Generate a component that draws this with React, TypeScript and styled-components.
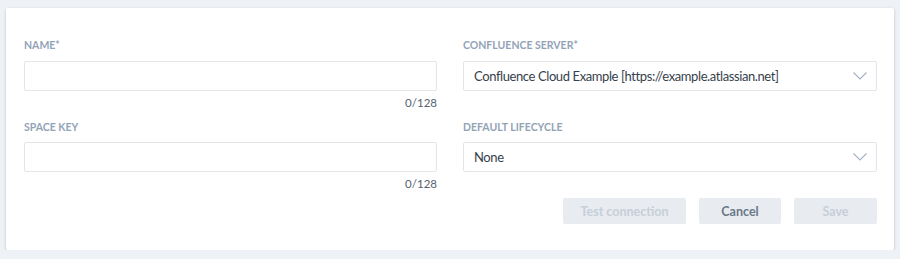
import React from "react";
import styled, { createGlobalStyle } from "styled-components";

const GlobalStyle = createGlobalStyle`
  html, body {
    margin: 0;
    padding: 0;
    background: #eef1f5;
    font-family: Lato, "Noto Sans", "Liberation Sans", sans-serif;
  }
`;

const Card = styled.div`
  margin: 8px 6px 0 6px;
  width: 888px;
  box-sizing: border-box;
  background: #ffffff;
  border-radius: 2px;
  box-shadow: 0 1px 3px rgba(0, 0, 0, 0.22);
  padding: 30px 17px 26px 18px;
`;

const Form = styled.div`
  display: grid;
  grid-template-columns: 413px 414px;
  column-gap: 26px;
`;

const Label = styled.label<{ $spaced?: boolean }>`
  display: block;
  height: 14px;
  line-height: 14px;
  margin: ${(p) => (p.$spaced ? "10px" : "0")} 0 ${(p) => (p.$spaced ? "8px" : "9px")} 0;
  font-size: 10.5px;
  font-weight: 700;
  color: #93a3b6;
  text-transform: uppercase;
`;

const Input = styled.input`
  display: block;
  width: 100%;
  height: 30px;
  box-sizing: border-box;
  border: 1px solid #e2e6eb;
  border-radius: 2px;
  padding: 0 10px;
  font: inherit;
  font-size: 13px;
  outline: none;
`;

const Select = styled.div`
  display: flex;
  align-items: center;
  justify-content: space-between;
  height: 30px;
  box-sizing: border-box;
  border: 1px solid #e2e6eb;
  border-radius: 2px;
  padding: 0 9px 0 10px;
  font-size: 13px;
  letter-spacing: -0.4px;
  color: #363f4b;
`;

const Counter = styled.div`
  height: 14px;
  line-height: 14px;
  margin-top: 5px;
  text-align: right;
  font-size: 11.5px;
  color: #56616f;
`;

const Spacer = styled.div`
  height: 14px;
  margin-top: 5px;
`;

const Actions = styled.div`
  grid-column: 2;
  display: flex;
  justify-content: flex-end;
  gap: 13px;
  margin-top: 7px;
`;

const Button = styled.button<{ $w: number; $disabled?: boolean }>`
  width: ${(p) => p.$w}px;
  height: 26px;
  border: none;
  border-radius: 2px;
  background: #e8ebef;
  font: inherit;
  font-size: 12.5px;
  font-weight: 700;
  color: ${(p) => (p.$disabled ? "#c6cfda" : "#6a7889")};
  padding: 0;
  cursor: ${(p) => (p.$disabled ? "default" : "pointer")};
`;

const Chevron = () => (
  <svg width="14" height="8" viewBox="0 0 14 8" fill="none">
    <path d="M0.5 0.5 L7 7 L13.5 0.5" stroke="#a3b1c2" strokeWidth="1.1" />
  </svg>
);

export default function App() {
  return (
    <>
      <GlobalStyle />
      <Card>
        <Form>
          <Label>Name*</Label>
          <Label>Confluence Server*</Label>
          <Input />
          <Select>
            <span>Confluence Cloud Example [https://example.atlassian.net]</span>
            <Chevron />
          </Select>
          <Counter>0/128</Counter>
          <Spacer />
          <Label $spaced>Space Key</Label>
          <Label $spaced>Default Lifecycle</Label>
          <Input />
          <Select>
            <span>None</span>
            <Chevron />
          </Select>
          <Counter>0/128</Counter>
          <Spacer />
          <Actions>
            <Button $w={123} $disabled>Test connection</Button>
            <Button $w={82}>Cancel</Button>
            <Button $w={83} $disabled>Save</Button>
          </Actions>
        </Form>
      </Card>
    </>
  );
}
